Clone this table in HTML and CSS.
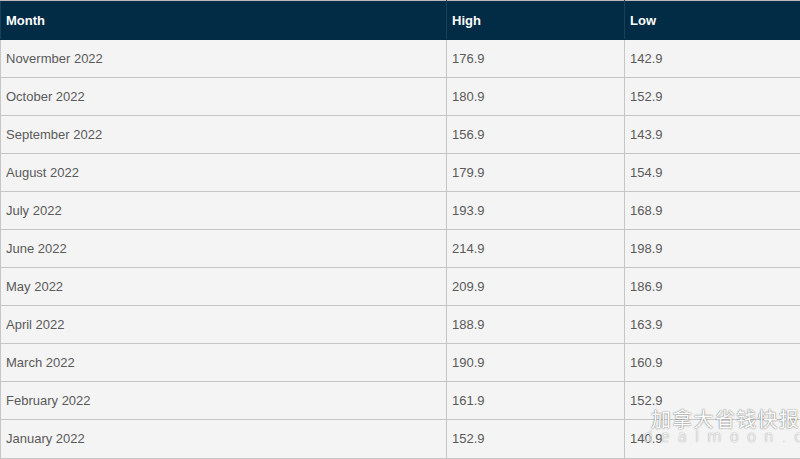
FILE: index.html
```html
<!DOCTYPE html>
<html>
<head>
<meta charset="utf-8">
<link rel="stylesheet" href="styles.css">
</head>
<body>
<div class="wrap">
<table class="prices">
  <colgroup><col class="c1"><col class="c2"><col class="c3"></colgroup>
  <thead>
    <tr><th>Month</th><th>High</th><th>Low</th></tr>
  </thead>
  <tbody>
    <tr><td>Novermber 2022</td><td>176.9</td><td>142.9</td></tr>
    <tr><td>October 2022</td><td>180.9</td><td>152.9</td></tr>
    <tr><td>September 2022</td><td>156.9</td><td>143.9</td></tr>
    <tr><td>August 2022</td><td>179.9</td><td>154.9</td></tr>
    <tr><td>July 2022</td><td>193.9</td><td>168.9</td></tr>
    <tr><td>June 2022</td><td>214.9</td><td>198.9</td></tr>
    <tr><td>May 2022</td><td>209.9</td><td>186.9</td></tr>
    <tr><td>April 2022</td><td>188.9</td><td>163.9</td></tr>
    <tr><td>March 2022</td><td>190.9</td><td>160.9</td></tr>
    <tr><td>February 2022</td><td>161.9</td><td>152.9</td></tr>
    <tr><td>January 2022</td><td>152.9</td><td>140.9</td></tr>
  </tbody>
</table>
<div class="watermark">
  <div class="wm-cn">加拿大省钱快报</div>
  <div class="wm-en">dealmoon.ca</div>
</div>
</div>
</body>
</html>
```
FILE: styles.css
```css
html, body {
  margin: 0;
  padding: 0;
  background: #ffffff;
  overflow: hidden;
}
.wrap {
  position: relative;
  width: 800px;
  height: 459px;
  overflow: hidden;
}
.prices {
  border-collapse: collapse;
  table-layout: fixed;
  width: 830px;
  font-family: "Liberation Sans", Arial, sans-serif;
  font-size: 13px;
}
.c1 { width: 446px; }
.c2 { width: 178px; }
.c3 { width: 206px; }
.prices th, .prices td {
  border: 1px solid #c6c6c6;
  text-align: left;
  padding: 0 0 0 5px;
  vertical-align: middle;
}
.prices th {
  background: #022b45;
  color: #ffffff;
  font-weight: bold;
  height: 38px;
  border-color: #1d3f55;
  border-top-color: #b9b9b9;
  border-bottom-color: #022b45;
}
.prices td {
  background: #f4f4f4;
  color: #5a5a5a;
  height: 37.05px;
}
.watermark {
  position: absolute;
  left: 643px;
  top: 406px;
  width: 200px;
  color: #ffffff;
  pointer-events: none;
}
.wm-cn {
  font-family: "Noto Sans CJK SC", sans-serif;
  font-size: 20px;
  line-height: 26px;
  letter-spacing: 1.3px;
  margin-left: 8px;
  text-shadow: 0 0 1px rgba(0,0,0,0.55), 0 0 2px rgba(0,0,0,0.3);
}
.wm-en {
  font-family: "DejaVu Sans", sans-serif;
  font-weight: 300;
  font-size: 15px;
  line-height: 20px;
  letter-spacing: 8px;
  margin-top: -5px;
  text-shadow: 0 0 1px rgba(0,0,0,0.45), 0 0 2px rgba(0,0,0,0.2);
}
```
